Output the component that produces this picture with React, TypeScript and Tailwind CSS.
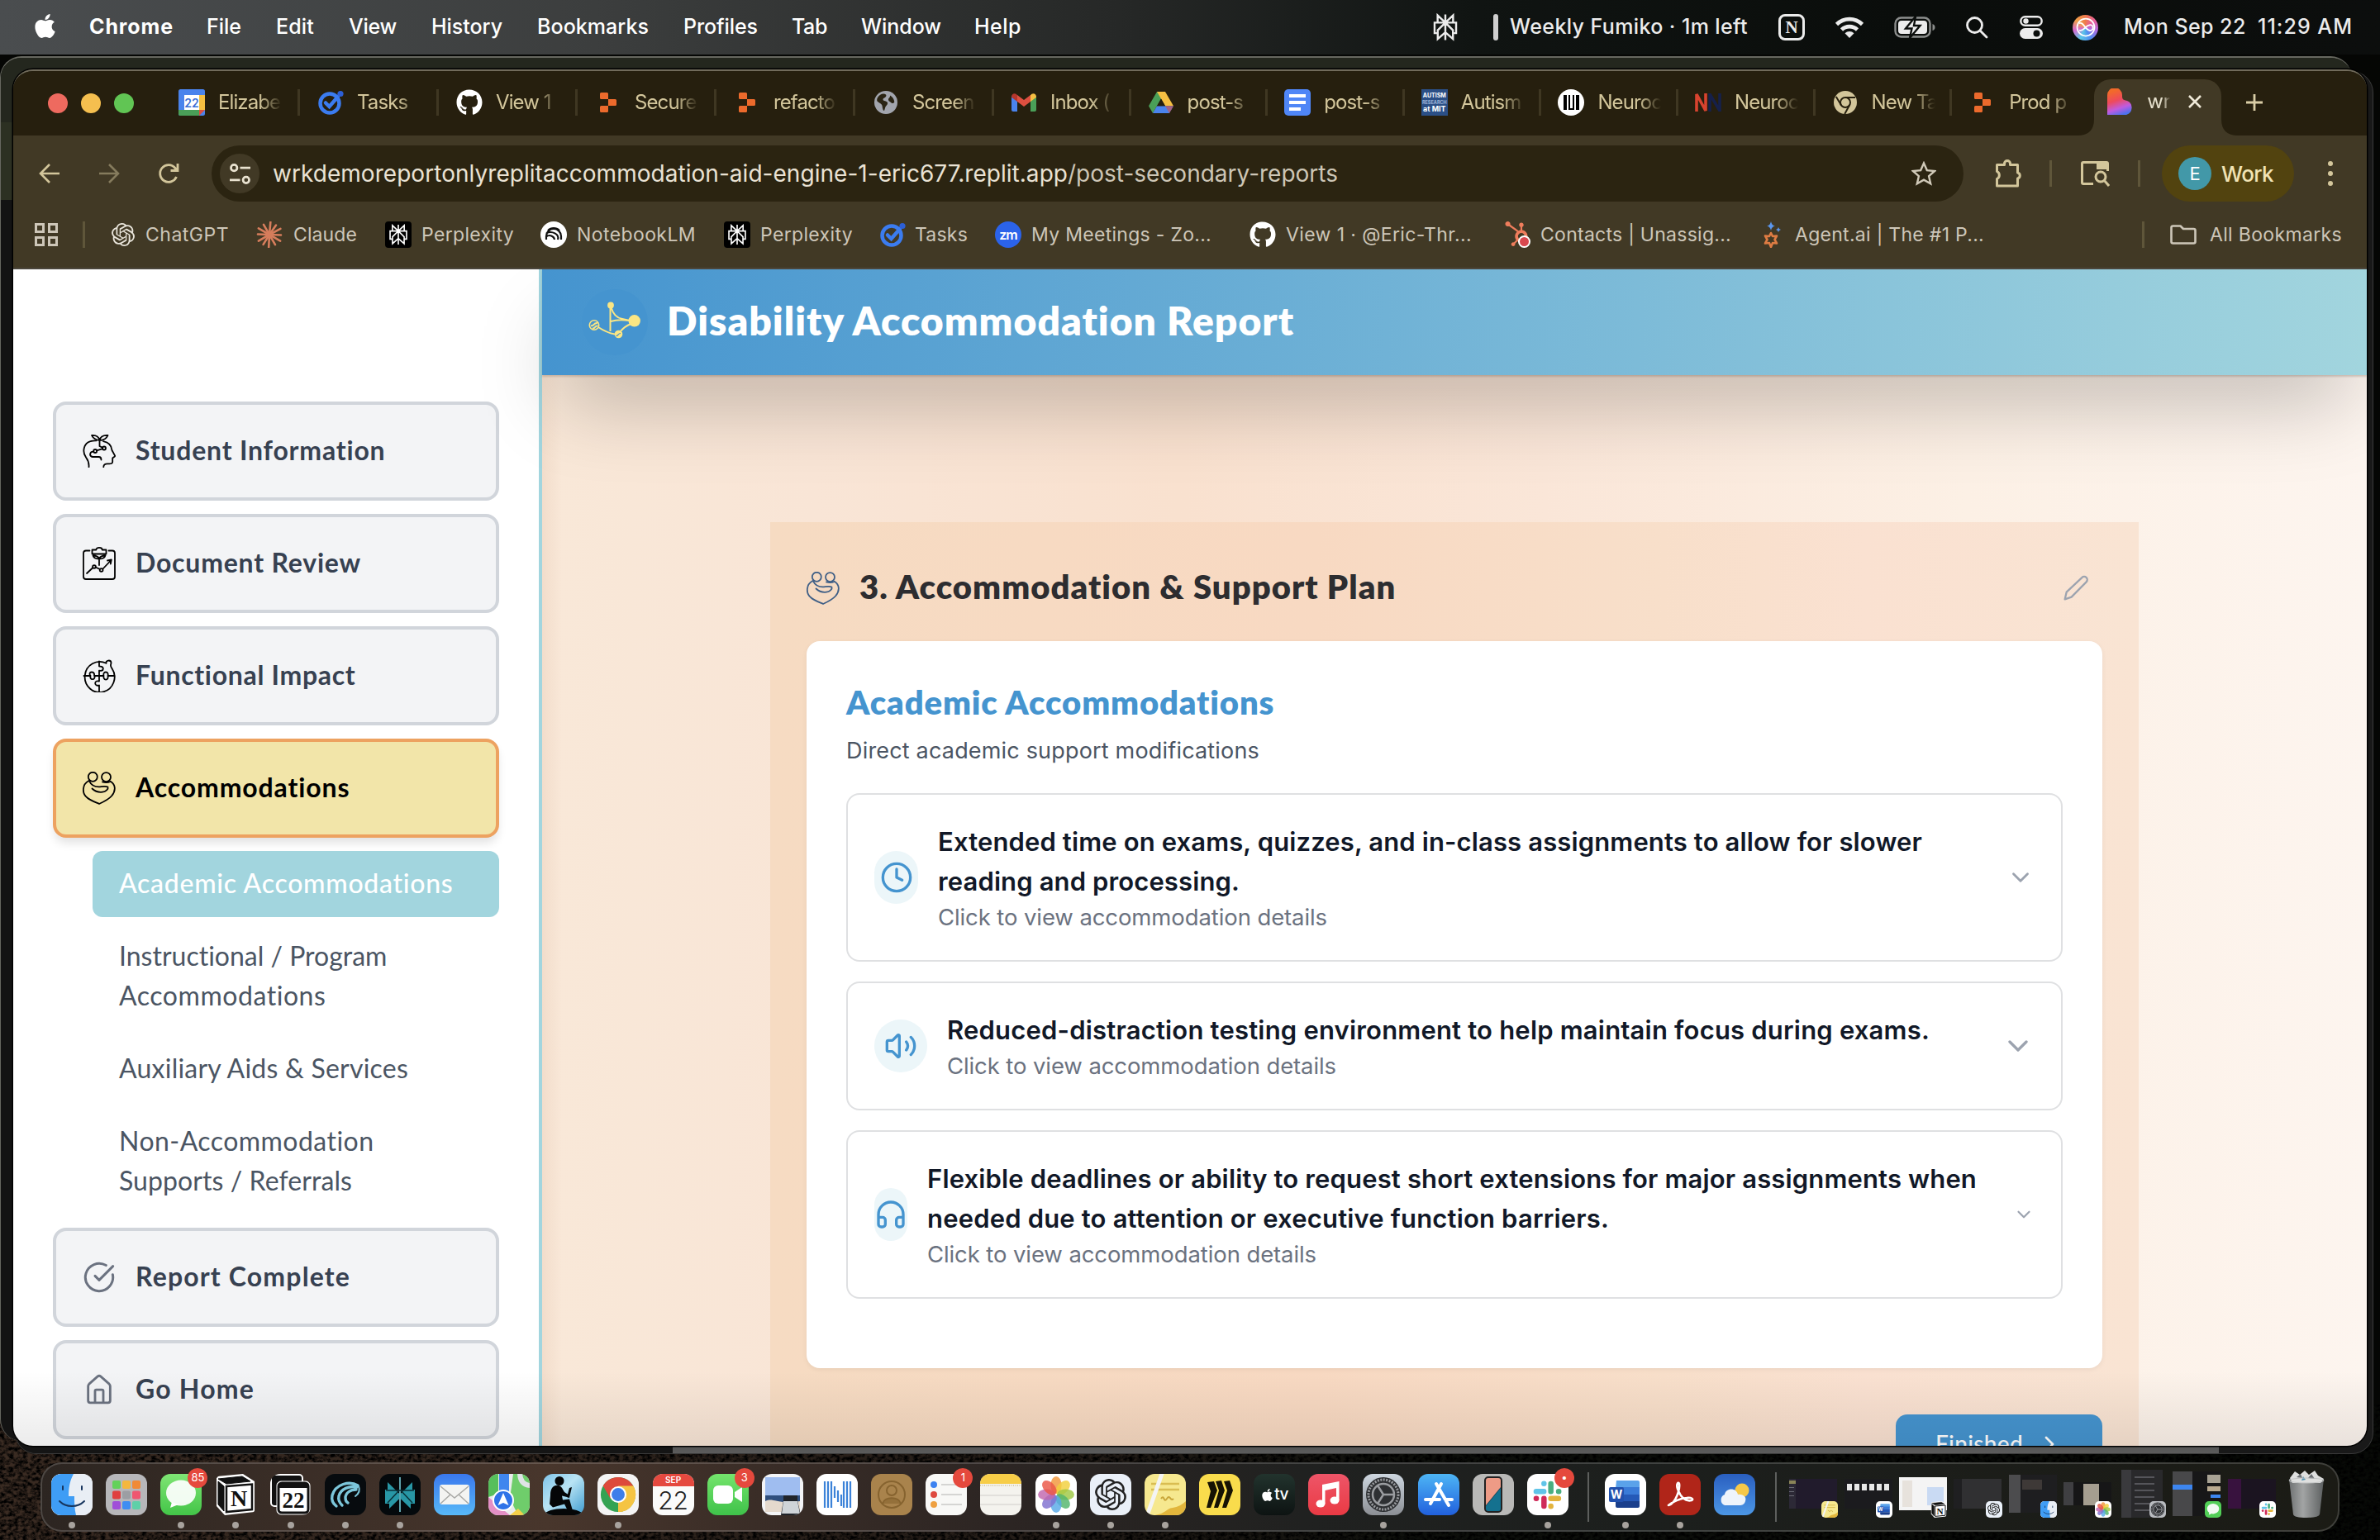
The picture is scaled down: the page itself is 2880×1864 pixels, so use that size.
import React, { useLayoutEffect, useRef, useState } from "react";
import { FaApple, FaGithub, FaHubspot } from "react-icons/fa";
import { SiOpenai } from "react-icons/si";
import { ChevronDown, ChevronRight, CircleCheckBig, Clock, Headphones, Volume2 } from "lucide-react";

/* Label that adjusts its tracking so the text fills the given width. */
function Fit({ w, className = "", children }: { w: number; className?: string; children: string }) {
  const ref = useRef<HTMLSpanElement>(null);
  const [ls, setLs] = useState(0);
  useLayoutEffect(() => {
    if (ref.current) {
      const natural = ref.current.getBoundingClientRect().width;
      setLs((w - natural) / children.length);
    }
  }, [w, children]);
  return (
    <span className={"block shrink-0 whitespace-pre " + className} style={{ width: w }}>
      <span ref={ref} className="inline-block" style={{ letterSpacing: ls }}>
        {children}
      </span>
    </span>
  );
}

/* ---------- small glyphs ---------- */

const Perplexity = ({ className, sw = 1.5 }: { className?: string; sw?: number }) => (
  <svg viewBox="0 0 24 24" className={className} fill="none" stroke="currentColor" strokeWidth={sw}>
    <path d="M12 1v22M12 8 5.4 1.8V8M12 8l6.600-6.200V8M5.600 17H2.800V8h18.400v9h-2.800M12 8l-6.500 6.500V22l6.500-5.700M12 8l6.500 6.500V22L12 16.300" />
  </svg>
);

const TaskIcon = ({ className }: { className?: string }) => (
  <svg viewBox="0 0 32 32" className={className} fill="none">
    <circle cx="15" cy="17" r="11.500" stroke="#3b7cf0" strokeWidth="4.500" />
    <path d="M10 16.500l4.500 4.500L25 9" stroke="#3b7cf0" strokeWidth="4.500" strokeLinecap="round" />
    <circle cx="28" cy="5.500" r="3.600" fill="#2c5fd6" />
  </svg>
);

const ChromeIcon = ({ className }: { className?: string }) => (
  <svg viewBox="0 0 48 48" className={className}>
    <circle cx="24" cy="24" r="22" fill="#34a353" />
    <path d="M24 24 5 13A22 22 0 0 1 43 13Z" fill="#dd4a3c" />
    <path d="M24 24 43 13A22 22 0 0 1 24 46Z" fill="#f5c443" />
    <path d="M5 13 14.500 29.500 24 14H43A22 22 0 0 0 5 13Z" fill="#dd4a3c" />
    <path d="M43.100 13H24l9.500 16.500L24 46A22 22 0 0 0 43.100 13Z" fill="#f5c443" />
    <circle cx="24" cy="24" r="10.500" fill="#fff" />
    <circle cx="24" cy="24" r="8.300" fill="#3d7eea" />
  </svg>
);

const Slack = ({ className }: { className?: string }) => (
  <svg viewBox="0 0 24 24" className={className} strokeWidth="4.200" strokeLinecap="round" fill="none">
    <path d="M9.300 3v.1M3.200 9.300h6" stroke="#5fc4e8" />
    <path d="M14.700 3.200v6M20.800 9.300h.1" stroke="#4aae80" />
    <path d="M14.700 14.700h6M14.700 20.800v.1" stroke="#e3b33d" />
    <path d="M9.300 14.700v6M3.200 14.700h.1" stroke="#cf2a58" />
  </svg>
);

const Photos = ({ className }: { className?: string }) => (
  <svg viewBox="0 0 50 50" className={className}>
    {[
      ["#f2963a", 0], ["#f1cf3c", 45], ["#9fc844", 90], ["#52b56b", 135],
      ["#58a9e8", 180], ["#7f70cf", 225], ["#c166ae", 270], ["#ea5546", 315],
    ].map(([c, a]) => (
      <ellipse key={a} cx="25" cy="13.500" rx="6.600" ry="10.500" fill={c as string} opacity=".82" transform={`rotate(${a} 25 25)`} />
    ))}
  </svg>
);

const Replit = ({ className }: { className?: string }) => (
  <svg viewBox="0 0 20 24" className={className} fill="#ec6a2c">
    <path d="M1.500 0H8.500Q10 0 10 1.500V8H1.500Q0 8 0 6.500V1.500Q0 0 1.500 0ZM10 8h8.500Q20 8 20 9.500v5q0 1.500-1.500 1.500H10ZM1.500 16H10v6.500Q10 24 8.500 24h-7Q0 24 0 22.500v-5Q0 16 1.500 16Z" />
  </svg>
);

/* ---------- page line icons ---------- */

const line = { fill: "none", stroke: "currentColor", strokeWidth: 1.8, strokeLinecap: "round", strokeLinejoin: "round" } as const;

const HeadPlant = () => (
  <svg viewBox="0 0 40 40" className="size-10" {...line}>
    <path d="M7.500 39.300C8 34 7 31.500 4 27.500-1 20.500 1.500 10.500 9.500 8.200 12 7.400 14 7.200 16.500 7.400M25 8.200C32 9.500 35 13.500 35.500 19l3.600 6.600c.6 1.400-2.800 1.900-2.900 3V33c0 2-2 2.600-5 2.400-4.500-.3-5.900 1-5.900 3.900" />
    <path d="M20.500 14V7C17 7 12.500 4.500 11 1c4.500-.3 8.500 1.500 9.500 6C21.500 2.500 25.500.7 30.500 1 29 4.500 25 7 20.500 7M20.500 14l3.200 1.600M17 19.300l7.200-2.200M13.200 20.700C8.500 20.500 7.500 26 12 27h7.500c2.200 0 3 1.300 3 3.500" />
    <circle cx="15.200" cy="20" r="2" /><circle cx="26" cy="16.500" r="2" />
  </svg>
);
const ClipboardPlant = () => (
  <svg viewBox="0 0 40 40" className="size-10" {...line}>
    <path d="M8.500 4.500H4Q1 4.500 1 7.500V36q0 3 3 3h32q3 0 3-3V7.500q0-3-3-3h-4.500" />
    <path d="M11.500 3.500h4.800c0-3.400 7.400-3.400 7.400 0h4.800v5h-17ZM20 22v-7.500c-4 0-6.500-1-7.500-4 4.500 0 6.500 1 7.500 4 1-3 3-4 7.500-4-1 3-3.500 4-7.500 4M5 32l7.500-7M15.500 24.500l5 2.300M24.500 26.500 34.500 16M30 16.500l4.800-1-1 5" />
    <circle cx="14" cy="24" r="1.900" /><circle cx="22.600" cy="28" r="1.900" />
  </svg>
);
const Puzzle = () => (
  <svg viewBox="0 0 40 40" className="size-10" {...line}>
    <path d="M28.500 4.800A18 18.500 0 1 0 35.500 11M28.500 4.800C27.500 1 34 .2 34.500 4c.2 2-2 3.200.8 7" />
    <path d="M20 2.500v6c1.500.5 4.600-.4 4.800 2.600.2 3.200-3.200 2.800-4.800 2.600V20M20 20h-5.500c.4 1.800-.2 4.200-2.600 4.200S9 21.800 9.500 20H1.500M9.500 20c-1.500-1.500-1.500-4.500 1.500-4.500s3.300 2.500 3 4.500M20 20h5.500c-.5-2-.1-4.500 2.500-4.500s3 2.500 2.500 4.500h8M25.500 20c-.3 2.400.2 4.600 2.600 4.600s2.800-2.600 2.400-4.600M20 20v6.500c-1.800-.4-5-.5-4.800 2.700.2 3 3.200 2.700 4.800 2.300v8" />
  </svg>
);
const Hug = () => (
  <svg viewBox="0 0 40 40" className="size-10" {...line}>
    <circle cx="12.300" cy="6.300" r="5.500" /><circle cx="28.500" cy="6.600" r="5.500" />
    <path d="M7.500 11C-1 15.500-1 26.500 5.500 31.500 9 34.500 15.500 37 20 39c5-2.300 11.500-5.500 15-9.500 5.500-6.500 5-14-1.200-17.500" />
    <path d="M8 11.300C11 17.500 16 18.700 21 18.300c3.500-.3 7-.9 9.500.2.900 2.600-2.500 5.700-6.500 6.200-4.500.5-8.700-.5-12.500-4.200M24 12.500c3.500 1.200 7.500.5 9.800-.5" />
  </svg>
);
const Home = () => (
  <svg viewBox="0 0 24 24" className="size-10" {...line} strokeWidth={1.7}>
    <path d="M4 9.500q0-.9.700-1.600L10.800 2.500q1.200-1 2.400 0l6.100 5.400q.7.700.7 1.600V20q0 1.500-1.500 1.500h-13Q4 21.500 4 20ZM9 21.500V13q0-.9.900-.9h4.200q.9 0 .9.900v8.500" />
  </svg>
);

/* ---------- menu bar ---------- */

function MenuBar() {
  const items: [string, number, number][] = [
    ["File", 42, 42], ["Edit", 46, 42], ["View", 58, 42], ["History", 86, 42], ["Bookmarks", 135, 42],
    ["Profiles", 90, 41], ["Tab", 43, 41], ["Window", 97, 40], ["Help", 57, 0],
  ];
  return (
    <div className="flex h-[66px] w-full items-center bg-[linear-gradient(90deg,#4a4d4f_0%,#3c3e3e_25%,#262827_47%,#101412_62%,#0a0d0b_80%,#0c0e0d_100%)] text-[25px] text-white">
      <FaApple className="mr-[37px] mb-1 ml-[38px] size-[33px]" />
      <Fit w={102} className="mr-10 font-bold">Chrome</Fit>
      {items.map(([t, w, g]) => (
        <div key={t} className="flex" style={{ marginRight: g }}>
          <Fit w={w} className="font-medium">{t}</Fit>
        </div>
      ))}
      <div className="ml-auto flex items-center text-[#ececec]">
        <Perplexity className="mr-[41px] size-[34px]" sw={1.7} />
        <div className="mr-[14px] h-8 w-1.5 rounded-full bg-[#cfcfcf]" />
        <Fit w={288} className="mr-[37px] font-medium">Weekly Fumiko · 1m left</Fit>
        <div className="mr-9 flex size-8 items-center justify-center rounded-[8px] border-[3px] border-[#ececec] font-['Liberation_Serif'] text-[21px] leading-none font-bold">N</div>
        <svg viewBox="0 0 36 26" className="mr-9 h-[26px] w-9" fill="none" stroke="#ececec" strokeWidth="4.600">
          <path d="M2.500 9.500a22 22 0 0 1 31 0M8.500 16a13.500 13.500 0 0 1 19 0" />
          <path d="m12.500 20.300 5.500 5.700 5.500-5.700a8 8 0 0 0-11 0Z" fill="#ececec" stroke="none" />
        </svg>
        <svg viewBox="0 0 50 26" className="mr-9 h-[26px] w-[50px]">
          <rect x="1.500" y="1.500" width="42" height="23" rx="7" fill="none" stroke="#8b8d8c" strokeWidth="2.400" />
          <rect x="5" y="5" width="35" height="16" rx="4" fill="#ececec" />
          <path d="M46.500 9v8q3-1 3-4t-3-4Z" fill="#8b8d8c" />
          <path d="M26 0 14 14.500h7.500L19 26l12.500-15H24Z" fill="#ececec" stroke="#0b0e0c" strokeWidth="2.400" />
        </svg>
        <svg viewBox="0 0 28 28" className="mr-[38px] size-7" fill="none" stroke="#ececec" strokeWidth="2.800" strokeLinecap="round">
          <circle cx="11.500" cy="11.500" r="9" /><path d="m18.500 18.500 7.500 7.500" />
        </svg>
        <svg viewBox="0 0 28 28" className="mr-9 size-7">
          <rect x="1.300" y="1.300" width="25.400" height="10.400" rx="5.200" fill="none" stroke="#ececec" strokeWidth="2.400" />
          <circle cx="7.500" cy="6.500" r="3.200" fill="#ececec" />
          <rect x="0" y="15" width="28" height="13" rx="6.500" fill="#ececec" />
          <circle cx="20.500" cy="21.500" r="4" fill="#0b0e0c" />
        </svg>
        <div className="mr-[31px] flex size-[31px] items-center justify-center rounded-full bg-[conic-gradient(#ef7b4c,#e85f9a,#b06be0,#4f8df0,#5cc8e8,#d96ad0,#f0a04a,#ef7b4c)]">
          <svg viewBox="0 0 24 24" className="size-7" fill="none" stroke="#fff" strokeWidth="1.500">
            <circle cx="12" cy="12" r="9" /><path d="M5 8c5-3 7 10 13 7 3-2 1-7-3-5-4 1-6 7-10 5" />
          </svg>
        </div>
        <Fit w={162} className="font-medium">Mon Sep 22  </Fit>
        <Fit w={115} className="mr-[33px] font-medium">11:29 AM</Fit>
      </div>
    </div>
  );
}

/* ---------- browser chrome ---------- */

const gCal = (
  <svg viewBox="0 0 32 32" className="size-8">
    <rect width="32" height="32" rx="2.500" fill="#4a83ec" />
    <path d="M25 7h7v18h-7z" fill="#f5bf42" /><path d="M0 25h25v7H2.500Q0 32 0 29.500Z" fill="#4a9f58" />
    <path d="M25 25h7l-7 7z" fill="#dd4f40" /><path d="M7 7h18v18H7z" fill="#fff" />
    <text x="16" y="21.500" textAnchor="middle" fontSize="14" fontWeight="600" fill="#3b6fd4" fontFamily="Inter">22</text>
  </svg>
);
const globe = (
  <svg viewBox="0 0 28 28" className="size-7">
    <circle cx="14" cy="14" r="14" fill="#a2a5ad" />
    <path d="M3.500 9C5 5.500 8 3.500 11.500 3.500c3.500.5 3.500 2.500 2 4-1 1.200-3 1-3 3 0 1.500 3 1.500 5 3 1.500 1.500 0 3.500-1.500 5-1 1-1 3-2 5.500-2-.5-2-4-2.500-6-.5-2.500-4.500-4-6-5.500-.5-1-.3-2.300 0-3.500ZM19 5.500c3 1.500 5 4.500 5.300 8-1.300 2-3 2-4.300.5-1.500-1.500-3-1.500-3-3.500s2.500-2.500 2-5Z" fill="#2a2414" />
  </svg>
);
const gmail = (
  <svg viewBox="0 0 30 22" className="h-[22px] w-[30px]">
    <path d="M0 2.500V20q0 2 2 2h5V8Z" fill="#4a83ec" /><path d="M30 2.500V20q0 2-2 2h-5V8Z" fill="#4a9f58" />
    <path d="M23 2.200V10l7-5.200C30-.5 25-1 23 2.200Z" fill="#f5bf42" /><path d="M7 2.200V10L0 4.800C0-.5 5-1 7 2.200Z" fill="#b5362c" />
    <path d="M7 2v8l8 6 8-6V2l-8 6Z" fill="#dd4f40" />
  </svg>
);
const drive = (
  <svg viewBox="0 0 30 26" className="h-[26px] w-[30px]">
    <path d="M10 0h10l-5 8.600L5 26 0 17.300Z" fill="#4a9f58" /><path d="M10 0h10l10 17.300H20Z" fill="#f5bf42" />
    <path d="M10 17.300h20L25 26H5Z" fill="#4a83ec" /><path d="m20 17.300h10L25 26Z" fill="#dd4f40" opacity=".6" />
    <path d="m15 8.600-5 8.700h10Z" fill="#261f0e" />
  </svg>
);
const gdoc = (
  <div className="flex size-8 flex-col justify-center gap-1 rounded-[5px] bg-[#4f86f7] pl-1.5">
    <div className="h-1 w-5 bg-white" /><div className="h-1 w-5 bg-white" /><div className="h-1 w-[14px] bg-white" />
  </div>
);
const mit = (
  <div className="flex size-8 flex-col items-center justify-center bg-[#2b4f86] text-[8px] leading-[8px] font-bold text-white">
    <span className="text-[7px]">AUTISM</span><span className="text-[5.5px] text-[#9fb6d8]">RESEARCH</span><span className="text-[9px]">at MIT</span>
  </div>
);
const bars = (
  <div className="flex size-8 items-center justify-center gap-[2px] rounded-full bg-white">
    <div className="h-[18px] w-[4px] bg-black" /><div className="h-[18px] w-[7px] border-x-2 border-b-2 border-black" /><div className="h-[18px] w-[4px] bg-black" />
  </div>
);
const nn = (
  <svg viewBox="0 0 32 22" className="h-[22px] w-8" fill="none" strokeWidth="3.600">
    <path d="M2 22V1l11 20V0" stroke="#d8432f" /><path d="M18 22V1l12 20V0" stroke="#16204a" />
  </svg>
);
const chromeMono = (
  <svg viewBox="0 0 28 28" className="size-7">
    <circle cx="14" cy="14" r="14" fill="#d3c69b" />
    <g stroke="#261f0e" strokeWidth="2" fill="none"><circle cx="14" cy="14" r="6" /><path d="M14 8h12M8.800 17 2.800 7M19.200 17l-6 11" /></g>
    <circle cx="14" cy="14" r="3.600" fill="#d3c69b" />
  </svg>
);
const blob = (
  <svg viewBox="0 0 32 32" className="size-8 shrink-0">
    <defs><linearGradient id="blob" x1=".3" y1="0" x2=".6" y2="1"><stop offset=".1" stopColor="#f26a2a" /><stop offset=".45" stopColor="#ee4a5c" /><stop offset=".75" stopColor="#c05be0" /><stop offset="1" stopColor="#4b72ef" /></linearGradient></defs>
    <path d="M0 8a9 9 0 0 1 18 0c0 4 0 6 6 7a9 9 0 0 1-1 17H0Z" fill="url(#blob)" />
  </svg>
);

const tabs: [React.ReactNode, string][] = [
  [gCal, "Elizabe"], [<TaskIcon className="size-8" />, "Tasks"], [<FaGithub className="size-8 text-white" />, "View 1"],
  [<Replit className="h-6 w-5" />, "Secure"], [<Replit className="h-6 w-5" />, "refacto"], [globe, "Screen"], [gmail, "Inbox ("],
  [drive, "post-s"], [gdoc, "post-s"], [mit, "Autism"], [bars, "Neuroc"], [nn, "Neuroc"], [chromeMono, "New Ta"],
  [<Replit className="h-6 w-5" />, "Prod p"],
];

function TabStrip() {
  return (
    <div className="flex h-[78px] items-center bg-[#261f0e] text-[24px] text-[#d3c69b]">
      <div className="ml-[42px] flex gap-4">
        <div className="size-6 rounded-full bg-[#ee6a5f]" />
        <div className="size-6 rounded-full bg-[#f5bf4f]" />
        <div className="size-6 rounded-full bg-[#61c554]" />
      </div>
      <div className="ml-[33px] flex pb-[2px]">
        {tabs.map(([icon, t], i) => (
          <div key={i} className={"flex h-8 items-center " + (i < 6 ? "w-[168px] border-r-[3px] border-[#3f3722] pl-[21px]" : i < 13 ? "w-[165.6px] border-r-[3px] border-[#3f3722] pl-5" : "w-[172px] pl-[21px]")}>
            <div className="mr-4 flex size-8 shrink-0 items-center justify-center">{icon}</div>
            <div className="w-[77px] overflow-hidden whitespace-nowrap tracking-[-0.9px] [mask-image:linear-gradient(90deg,#000_65%,transparent)]">{t}</div>
          </div>
        ))}
      </div>
      <div className="relative flex h-[68px] w-[154px] items-center self-end rounded-t-[20px] bg-[#413925] pb-3.5 pl-4">
        <svg viewBox="0 0 20 20" className="absolute bottom-0 -left-5 size-5" fill="#413925"><path d="M20 0v20H0Q20 20 20 0Z" /></svg>
        <svg viewBox="0 0 20 20" className="absolute -right-5 bottom-0 size-5" fill="#413925"><path d="M0 0v20h20Q0 20 0 0Z" /></svg>
        {blob}
        <div className="ml-4 w-[28px] overflow-hidden text-[#e6e0cd] [mask-image:linear-gradient(90deg,#000_70%,transparent)]">wr</div>
        <svg viewBox="0 0 16 16" className="ml-[22px] size-4 shrink-0" stroke="#f0ead9" strokeWidth="2.600"><path d="m1 1 14 14M15 1 1 15" /></svg>
      </div>
      <svg viewBox="0 0 20 20" className="mb-[2px] ml-[30px] size-5" stroke="#d9cda6" strokeWidth="2.800"><path d="M10 0v20M0 10h20" /></svg>
    </div>
  );
}

function Toolbar() {
  return (
    <div className="flex h-[92px] items-center bg-[#413925] text-[#d3c69b]">
      <svg viewBox="0 0 24 24" className="ml-8 size-6 overflow-visible" fill="none" stroke="currentColor" strokeWidth="2.600"><path d="M12 1 1 12l11 11M1 12h23" /></svg>
      <svg viewBox="0 0 24 24" className="ml-12 size-6 overflow-visible text-[#857b5d]" fill="none" stroke="currentColor" strokeWidth="2.600"><path d="m12 1 11 11-11 11M23 12H0" /></svg>
      <svg viewBox="0 0 24 24" className="ml-12 size-6 overflow-visible" fill="none" stroke="currentColor" strokeWidth="2.800"><path d="M21.500 16A10.300 10.300 0 1 1 20 5.500l2 2.500M23 0v8.500h-8.500" /></svg>
      <div className="ml-[40px] flex h-[68px] w-[2120px] items-center rounded-full bg-[#2b2411] pl-[10px] text-[28px]">
        <div className="flex size-12 items-center justify-center rounded-full bg-[#413925]">
          <svg viewBox="0 0 24 24" className="size-[25px]" fill="none" stroke="#e9e2d0" strokeWidth="2.600"><circle cx="5" cy="5" r="3.600" /><path d="M12 5h12M0 19h12" /><circle cx="19" cy="19" r="3.600" /></svg>
        </div>
        <Fit w={962} className="ml-4 text-[#e9e2d4]">wrkdemoreportonlyreplitaccommodation-aid-engine-1-eric677.replit.app</Fit>
        <Fit w={327} className="text-[#cdc6b6]">/post-secondary-reports</Fit>
        <svg viewBox="0 0 30 30" className="mr-[33px] ml-auto size-[30px]" fill="none" stroke="#d0c9b8" strokeWidth="2.400"><path d="m15 2.500 3.800 8.600 9.300.9-7 6.200 2.100 9.200L15 22.600l-8.200 4.800 2.100-9.200-7-6.200 9.300-.9Z" /></svg>
      </div>
      <svg viewBox="0 0 34 34" className="ml-[37px] size-[34px]" fill="none" stroke="currentColor" strokeWidth="3"><path d="M3.500 6.500h9V5a3.500 3.500 0 0 1 7 0v1.500h9v9.500a3.600 3.600 0 0 1 0 7v9h-25v-8.500a5 5 0 0 0 0-9Z" strokeLinejoin="round" /></svg>
      <div className="ml-[33px] h-8 w-[3px] bg-[#5f563a]" />
      <svg viewBox="0 0 36 32" className="ml-[34px] h-8 w-9" fill="none" stroke="currentColor" strokeWidth="3"><path d="M16 28.500H4q-1.500 0-1.500-1.500V4Q2.500 2.500 4 2.500h28q1.500 0 1.500 1.500v9" /><path d="M20 2h14v9H20z" fill="currentColor" stroke="none" /><circle cx="25" cy="20" r="6" /><path d="m29 24 6 7" /></svg>
      <div className="ml-[34px] h-8 w-[3px] bg-[#5f563a]" />
      <div className="ml-[26px] flex h-[68px] w-[160px] items-center rounded-full bg-[#52430f] pl-5">
        <div className="flex size-10 items-center justify-center rounded-full bg-[#4298a8] text-[22px] text-white">E</div>
        <Fit w={63} className="ml-3 text-[26px] font-medium text-[#f1e3b4]">Work</Fit>
      </div>
      <div className="ml-[41px] flex flex-col gap-[6px]">
        <div className="size-[6px] rounded-full bg-[#d3c69b]" /><div className="size-[6px] rounded-full bg-[#d3c69b]" /><div className="size-[6px] rounded-full bg-[#d3c69b]" />
      </div>
    </div>
  );
}

const perplexityTile = (
  <div className="flex size-8 items-center justify-center rounded-[4px] bg-black text-white"><Perplexity className="size-[26px]" /></div>
);
const claude = (
  <svg viewBox="0 0 32 32" className="size-8" stroke="#d67d5c" strokeWidth="2.600" strokeLinecap="round">
    {[5, 35, 62, 92, 120, 150, 183, 212, 240, 272, 300, 330].map((a, i) => (
      <path key={a} d={i % 2 ? "M16 16V2" : "M16 16V.8"} transform={`rotate(${a} 16 16)`} />
    ))}
  </svg>
);
const notebook = (
  <svg viewBox="0 0 32 32" className="size-8"><circle cx="16" cy="16" r="16" fill="#fff" />
    <g fill="none" stroke="#111" strokeWidth="2.200"><path d="M7 22v-4a9 9 0 0 1 18 0v4M7 14.500a9 7 0 0 1 14 7.500M7 18.500a6 5.500 0 0 1 10 3.500M9 11a10 10 0 0 1 14 0" /></g>
  </svg>
);
const zm = <div className="flex size-8 items-center justify-center rounded-full bg-[#2b63ea] text-[16px] font-semibold tracking-[-1px] text-white">zm</div>;
const hubspot = (
  <div className="relative size-8"><FaHubspot className="size-[30px] text-[#ef7d5c]" /><div className="absolute right-0 bottom-0 size-[15px] rounded-full border-2 border-white bg-[#d9484f]" /></div>
);
const agent = (
  <svg viewBox="0 0 22 32" className="h-8 w-[22px]">
    <path d="M9 0q1 5 5 5.500-4 .5-5 5.500-1-5-5-5.500Q8 5 9 0ZM18 7q.5 2.500 3 3-2.500.5-3 3-.5-2.500-3-3 2.500-.5 3-3Z" fill="#5b97ee" />
    <path d="M9 14l2 4 5-.5-2.500 4.500 2.500 4.500-5-.5-2 5-2-5-5 .5L4.500 22 2 17.500l5 .5Z" fill="none" stroke="#de7c43" strokeWidth="2.600" strokeLinejoin="round" />
  </svg>
);

/* icon, label, icon width, label width, gap to label, gap to next entry */
const bookmarks: [React.ReactNode, string, number, number, number, number][] = [
  [<SiOpenai className="size-[28px] text-[#e8e4da]" />, "ChatGPT", 28, 101, 13, 33],
  [claude, "Claude", 32, 77, 13, 34],
  [perplexityTile, "Perplexity", 32, 112, 12, 32],
  [notebook, "NotebookLM", 32, 144, 12, 34],
  [perplexityTile, "Perplexity", 32, 112, 12, 32],
  [<TaskIcon className="size-8" />, "Tasks", 32, 64, 11, 33],
  [zm, "My Meetings - Zo...", 32, 218, 12, 46],
  [<FaGithub className="size-8 text-white" />, "View 1 · @Eric-Thr...", 32, 225, 12, 39],
  [hubspot, "Contacts | Unassig...", 32, 231, 12, 39],
  [agent, "Agent.ai | The #1 P...", 22, 229, 16, 0],
];

function Bookmarks() {
  return (
    <div className="flex h-[70px] items-center border-b-2 border-[#4b463c] bg-[#413925] pb-3 text-[23px] text-[#cdc6b8]">
      <svg viewBox="0 0 28 28" className="ml-[26px] size-7" fill="none" stroke="#cdc6b8" strokeWidth="3"><path d="M1.500 1.500h9v9h-9zM17.500 1.500h9v9h-9zM1.500 17.500h9v9h-9zM17.500 17.500h9v9h-9z" /></svg>
      <div className="mr-[32px] ml-[30px] h-8 w-[3px] bg-[#5f563a]" />
      {bookmarks.map(([icon, t, iw, w, gap, after], i) => (
        <div key={i} className="flex items-center" style={{ marginRight: after }}>
          <div className="flex items-center" style={{ width: iw, marginRight: gap }}>{icon}</div>
          <Fit w={w}>{t}</Fit>
        </div>
      ))}
      <div className="ml-auto h-8 w-[3px] bg-[#5f563a]" />
      <svg viewBox="0 0 32 24" className="mx-[16px] ml-[31px] h-6 w-8" fill="none" stroke="#cdc6b8" strokeWidth="2.600" strokeLinejoin="round"><path d="M3.500 1.500h9l3.500 3.500h12.500q2 0 2 2v13.500q0 2-2 2h-25q-2 0-2-2v-17q0-2 2-2Z" /></svg>
      <Fit w={160} className="mr-[30px]">All Bookmarks</Fit>
    </div>
  );
}

/* ---------- report page ---------- */

function NavCard({ icon, label, w, active }: { icon: React.ReactNode; label: string; w: number; active?: boolean }) {
  return (
    <div className={"flex h-[120px] w-[540px] shrink-0 items-center gap-6 rounded-[16px] border-4 pl-8 text-[32px] font-bold " + (active ? "border-[#eda260] bg-[#f2e5a9] text-black shadow-[0_8px_12px_-2px_rgba(0,0,0,0.12)]" : "border-[#d1d5db] bg-[#f3f4f6] text-[#374151]")}>
      {icon}
      <Fit w={w} className="pb-[3px]">{label}</Fit>
    </div>
  );
}

function SubItem({ lines, active }: { lines: [string, number][]; active?: boolean }) {
  return (
    <div className={"rounded-[12px] px-8 pt-[15px] pb-[17px] " + (active ? "bg-[#a2d5de] font-medium text-white" : "")}>
      {lines.map(([t, w]) => <Fit key={t} w={w}>{t}</Fit>)}
    </div>
  );
}

function Sidebar() {
  return (
    <div className="flex w-[640px] shrink-0 flex-col gap-4 border-r-4 border-[#a2d5de] bg-white pt-[160px] pl-12 font-['Lato']">
      <NavCard icon={<span className="text-black"><HeadPlant /></span>} label="Student Information" w={303} />
      <NavCard icon={<span className="text-black"><ClipboardPlant /></span>} label="Document Review" w={273} />
      <NavCard icon={<span className="text-black"><Puzzle /></span>} label="Functional Impact" w={267} />
      <NavCard icon={<Hug />} label="Accommodations" w={260} active />
      <div className="ml-12 flex w-[492px] flex-col gap-2 text-[32px] leading-[48px] text-[#4b5563]">
        <SubItem lines={[["Academic Accommodations", 405]]} active />
        <SubItem lines={[["Instructional / Program", 325], ["Accommodations", 251]]} />
        <SubItem lines={[["Auxiliary Aids & Services", 350]]} />
        <SubItem lines={[["Non-Accommodation", 309], ["Supports / Referrals", 282]]} />
      </div>
      <NavCard icon={<CircleCheckBig className="size-10 text-[#6b7280]" strokeWidth={1.8} />} label="Report Complete" w={260} />
      <NavCard icon={<span className="text-[#6b7280]"><Home /></span>} label="Go Home" w={144} />
    </div>
  );
}

function Header() {
  return (
    <div className="relative z-10 flex h-32 shrink-0 items-center bg-[linear-gradient(90deg,#4594cf_0%,#a2d5de_100%)] shadow-[0_50px_100px_-24px_rgba(0,0,0,0.28),0_2px_2px_rgba(120,90,70,0.25)]">
      <div className="ml-12 flex size-20 items-center justify-center rounded-full bg-[#4594cf]">
        <svg viewBox="0 0 64 60" className="h-[60px] w-16" fill="none" stroke="#fbe683" strokeWidth="2">
          <path d="M26.500 13V41M27.500 12C30 21 35 25 41 26L50 28M27 29c7-2 15-2 22-1M51.500 32C46 34 42 37 38 42M12 36c6 4 12 7 20 8.500" />
          <circle cx="27" cy="9.500" r="3.900" fill="#fbe683" stroke="none" /><circle cx="55.700" cy="28.300" r="7.200" fill="#fbe683" stroke="none" />
          <circle cx="7" cy="33.500" r="5.700" strokeWidth="1.600" /><path d="M3 34c4 2 3-4 8-3M5 37.500c4 .5 2-3.500 6.500-3" />
          <circle cx="36.500" cy="44.500" r="4.800" fill="#fbe683" stroke="none" /><path d="M33.500 46.500c3 .5 2-3 5.500-3" stroke="#4594cf" strokeWidth="1.200" />
        </svg>
      </div>
      <Fit w={760} className="ml-[23px] pb-1 font-['Lato'] text-[48px] font-extrabold text-white">Disability Accommodation Report</Fit>
    </div>
  );
}

function Item({ icon, pill, lines, chev }: { icon: React.ReactNode; pill: string; lines: [string, number][]; chev: string }) {
  return (
    <div className="flex items-center rounded-[16px] border-2 border-[#dfe0e2] bg-white p-8">
      <div className={"mr-6 flex h-16 shrink-0 items-center justify-center rounded-full bg-[#ecf6f9] text-[#4594cf] " + pill}>{icon}</div>
      <div className="flex-1">
        <div className="-mb-px pt-px">
          {lines.map(([t, w]) => <Fit key={t} w={w} className="text-[31px] leading-[48px] font-semibold text-[#111827]">{t}</Fit>)}
        </div>
        <Fit w={471} className="text-[27.5px] leading-10 text-[#6b7280]">Click to view accommodation details</Fit>
      </div>
      <ChevronDown className={"shrink-0 text-[#9ca3af] " + chev} />
    </div>
  );
}

function Report() {
  return (
    <div className="flex flex-1 flex-col overflow-hidden bg-[linear-gradient(90deg,rgba(160,90,50,0.08)_0,transparent_24px),linear-gradient(90deg,#f9e8d8_0%,#f9e5d6_15%,#f9e1cf_35%,#fae6d8_55%,#fcf0e5_78%,#fdf5ef_100%)] pt-[178px] pl-[276px]">
      <div className="flex w-[1656px] flex-1 flex-col bg-[linear-gradient(90deg,#f6dbc2_0%,#f8d9c2_40%,#f8dfca_65%,#fae1d1_80%,#f9e4d3_100%)] px-11 pt-[50px]">
        <div className="mb-[34px] flex h-[60px] shrink-0 items-center">
          <span className="text-[#3f5f86]"><Hug /></span>
          <Fit w={650} className="ml-6 pb-1 font-['Lato'] text-[40px] font-extrabold text-[#2d2d30]">3. Accommodation & Support Plan</Fit>
          <svg viewBox="0 0 24 24" className="mr-4 ml-auto size-8" fill="none" stroke="#9ca3af" strokeWidth="1.700" strokeLinejoin="round"><path d="M17.500 2.300a2.700 2.700 0 0 1 4 4L8 20l-6 2 1.500-6.500Z" /></svg>
        </div>
        <div className="flex h-[880px] shrink-0 flex-col rounded-[16px] bg-white px-12 pt-11 shadow-[0_2px_6px_rgba(0,0,0,0.06)]">
          <Fit w={519} className="font-['Lato'] text-[40px] leading-[60px] font-extrabold text-[#4594cf]">Academic Accommodations</Fit>
          <Fit w={500} className="mt-[9px] text-[27px] leading-10 text-[#4b5563]">Direct academic support modifications</Fit>
          <div className="mt-[31px] flex flex-col gap-6">
            <Item pill="w-[53px]" icon={<Clock className="size-10" />} chev="size-[34px]" lines={[["Extended time on exams, quizzes, and in-class assignments to allow for slower", 1191], ["reading and processing.", 365]]} />
            <Item pill="w-16" icon={<Volume2 className="size-10" />} chev="size-10" lines={[["Reduced-distraction testing environment to help maintain focus during exams.", 1189]]} />
            <Item pill="w-10" icon={<Headphones className="size-10" />} chev="size-[26px]" lines={[["Flexible deadlines or ability to request short extensions for major assignments when", 1270], ["needed due to attention or executive function barriers.", 825]]} />
          </div>
        </div>
        <div className="mt-14 flex h-[72px] w-[250px] shrink-0 items-center self-end rounded-[14px] bg-[#4594cf] pl-12 text-[28px] font-medium text-white">
          <Fit w={106} className="pb-0.5 font-['Lato']">Finished</Fit>
          <ChevronRight className="ml-[16px] size-8" />
        </div>
      </div>
    </div>
  );
}

/* ---------- dock ---------- */

type DockItem = { art: React.ReactNode; bg: string; dot?: boolean; badge?: string };

const S = ({ children }: { children: React.ReactNode }) => <svg viewBox="0 0 50 50" className="size-full">{children}</svg>;

const finderArt = <S><path d="M0 0h50v50H0z" fill="#e9eef5" /><path d="M0 0h27c-5 9-6 18-6 27h7c0 8 0 15 2 23H0Z" fill="#3f9df5" /><g stroke="#17355e" strokeWidth="2" fill="none" strokeLinecap="round"><path d="M14 15v4M37 15v4M10 33c8 8 22 8 30 0" /></g></S>;
const notionArt = <S><path d="M2 3 34 0l14 9v37L12 50 2 39Z" fill="#fff" /><path d="M4 6 33 3l10 6-29 3ZM4 9l7 6v30l-7-8Z" fill="#111" stroke="#111" /><path d="M14 15l31-2.500V43L14 46Z" fill="#fff" stroke="#111" strokeWidth="2.500" /><text x="29" y="39" textAnchor="middle" fontSize="28" fontWeight="700" fontFamily="Liberation Serif" fill="#111">N</text></S>;
const photosArt = <Photos className="size-full" />;
const gptArt = <SiOpenai className="m-auto size-[76%] text-[#222]" />;
const messagesArt = <S><ellipse cx="25" cy="23" rx="18" ry="15.500" fill="#fff" opacity=".92" /><path d="M14 34l-2 7 10-4Z" fill="#fff" /></S>;
const settingsArt = <S><circle cx="25" cy="25" r="21" fill="#2e3033" /><circle cx="25" cy="25" r="18" fill="none" stroke="#9a9ca0" strokeWidth="3" strokeDasharray="2 1.500" /><circle cx="25" cy="25" r="13" fill="none" stroke="#9a9ca0" strokeWidth="2.500" /><path d="M25 25H38M25 25l-7-11M25 25l-7 11" stroke="#9a9ca0" strokeWidth="2.500" /></S>;
const wordArt = <S><path d="M14 8h26q2 0 2 2v8H13Z" fill="#5aa2ea" /><path d="M13 16h29v9H13z" fill="#3a7bd8" /><path d="M13 25h29v8H13z" fill="#2559b8" /><path d="M13 33h29v6q0 2-2 2H15q-2 0-2-2Z" fill="#1a3f8c" /><rect x="5" y="16" width="18" height="18" rx="2" fill="#2251ae" /><text x="14" y="30" textAnchor="middle" fontSize="14" fontWeight="700" fill="#fff" fontFamily="Inter">W</text></S>;
const stickArt = <S><g stroke="#d9bd52" strokeWidth="2.500"><path d="M8 12h34M8 19h34" /></g><path d="M20 30c4-6 3 6 7 0s4 4 8 0" fill="none" stroke="#c9a63a" strokeWidth="2" /><path d="M12 50c14-2 14-8 22-9 6-1 12-4 16-8v17Z" fill="#e2b63c" /><path d="M22-3 4 48" stroke="#f4f4f4" strokeWidth="5" strokeLinecap="round" /></S>;

const dockA: DockItem[] = [
  { bg: "bg-white", art: finderArt, dot: true },
  { bg: "bg-[#b7b7ba]", art: <S>{["#63d15b", "#f4b73e", "#f08a36", "#e04040", "#9c9ea3", "#ef5670", "#a04fd8", "#3f8df2", "#5fd0a8"].map((c, i) => <rect key={i} x={8 + (i % 3) * 12} y={8 + Math.floor(i / 3) * 12.500} width="10" height="10" rx="2" fill={c} />)}</S> },
  { bg: "bg-[linear-gradient(#7fe574,#43c548)]", art: messagesArt, dot: true, badge: "85" },
  { bg: "", art: notionArt, dot: true },
  { bg: "", art: <S><rect x="1" y="1" width="38" height="38" rx="4" fill="#111" stroke="#fff" strokeWidth="2" /><rect x="8" y="9" width="40" height="40" rx="5" fill="#fff" stroke="#fff" /><rect x="10" y="11" width="36" height="36" rx="4" fill="#fff" stroke="#111" strokeWidth="3" /><path d="M10 12h36v5H10z" fill="#111" /><text x="28" y="41" textAnchor="middle" fontSize="27" fontWeight="700" fontFamily="Liberation Serif" fill="#111">22</text></S>, dot: true },
  { bg: "bg-[#070b0e]", art: <S><g fill="none" stroke="#7cc6da" strokeWidth="3.400" strokeLinecap="round"><path d="M40 14C30 8 13 12 9 26c-1 5 1 10 5 13M39 16C30 14 19 18 17 27c-1 4 1 8 4 11M38 19c-7 0-13 4-13 10 0 3 1 5 3 6" /><path d="M41 15c2 5 0 9-4 12" strokeWidth="2" /></g></S>, dot: true },
  { bg: "bg-[#04090c]", art: <S><g fill="#2fb0c2"><path d="M25 4v42" stroke="#7fd6e2" strokeWidth="1.500" /><path d="M24.300 24 10 10v9H7v17h5v6l12.300-12ZM25.700 24 40 10v9h3v17h-5v6L25.700 30Z" opacity=".85" /></g><path d="M24 20 10 35M26 20l14 15M8 20h34" stroke="#0a3138" strokeWidth="1.500" /></S>, dot: true },
  { bg: "bg-[linear-gradient(#3a78ee,#58b9f8)]", art: <S><rect x="7" y="13" width="36" height="24" rx="3" fill="#f4f4f2" /><path d="m8 15 17 14 17-14M8 36l12-11M42 36 30 25" fill="none" stroke="#a9a9a6" strokeWidth="1.500" /></S> },
  { bg: "bg-[#e9ecec]", art: <S><path d="M30 0h20v50H36L26 30Z" fill="#6fcd6b" /><path d="M0 0h12v24L0 28Z" fill="#57bf5c" /><path d="M13 0h12v26H13Z" fill="#3f86ee" /><path d="M0 28l26 22H0Z" fill="#e38fc5" /><path d="M26 50 36 42l8 8Z" fill="#f4cf4a" /><path d="M38-2c0 14 8 16 14 16" stroke="#dfe3e6" strokeWidth="6" fill="none" /><circle cx="18" cy="32" r="12" fill="#2f73e8" stroke="#fff" strokeWidth="2" /><path d="m18 23 6.500 15L18 35l-6.500 3Z" fill="#fff" /></S> },
  { bg: "bg-[linear-gradient(135deg,#7fc4ea,#b9e4f4_45%,#3f9cd0)]", art: <S><g fill="#050607"><circle cx="20" cy="8.500" r="5.500" /><path d="M9 26c0-9 4-13 10-12 4 1 5 5 7 8l6 4-1 2.500-8-2 1 5 8-1 4 14h-6l-4-8-14 4-4-4Z" /><path d="M0 50q6-8 25-8t25 8ZM32 17l3-1-3 13-3-1Z" /></g></S> },
  { bg: "bg-[#f4f4f4]", art: <ChromeIcon className="m-auto size-[92%]" />, dot: true },
  { bg: "bg-[#fbfbfa]", art: <div className="flex size-full flex-col items-center"><div className="flex h-[15px] w-full items-center justify-center bg-[#e5493f] text-[10px] font-semibold text-white">SEP</div><div className="text-[30px] leading-[34px] font-light text-[#222]">22</div></div> },
  { bg: "bg-[linear-gradient(#74e46c,#3fc24a)]", art: <S><rect x="7" y="14" width="24" height="22" rx="6" fill="#fff" /><path d="m33 22 9-6v18l-9-6Z" fill="#fff" /></S>, badge: "3" },
  { bg: "bg-[#f3f4f6]", art: <S><path d="M4 4h42v42H4z" fill="#9fbdf0" /><path d="M4 26h42v8H4z" fill="#2f4f7e" /><path d="M4 33c10-5 12 4 42 0v13H4Z" fill="#e4d9cd" /><path d="M26 26h17v6l4 18H23l3-18Z" fill="#20242a" /><path d="M26 33h17l3 15H24Z" fill="#cfd4d8" /></S> },
  { bg: "bg-white", art: <S><g stroke="#3b82d8" strokeWidth="2.200"><path d="M10 9v32M14 9v32M18 9v32M22 15v14M26 20v14M30 25v14M33 9v32M37 9v32M41 9v32" /></g></S> },
  { bg: "bg-[#a9834c]", art: <S><circle cx="25" cy="25" r="16" fill="none" stroke="#86632f" strokeWidth="2" /><circle cx="25" cy="20" r="6" fill="none" stroke="#86632f" strokeWidth="2" /><path d="M14 36c2-9 20-9 22 0" fill="#94703a" stroke="#86632f" strokeWidth="2" /></S> },
  { bg: "bg-[#f8f8f6]", art: <S><circle cx="10" cy="13" r="4" fill="#3d82f0" /><circle cx="10" cy="25" r="4" fill="#de4a3f" /><circle cx="10" cy="37" r="4" fill="#eea041" /><path d="M19 13h25M19 25h25M19 37h25" stroke="#c9c9c7" strokeWidth="1.500" /></S>, badge: "1" },
  { bg: "bg-[#f4f3ee]", art: <S><path d="M0 0h50v12H0z" fill="#f7cd47" /><path d="M0 14h50" stroke="#b7a46a" strokeDasharray="1 1.500" /><path d="M0 26h50M0 37h50" stroke="#cfcec9" /></S> },
  { bg: "bg-white", art: photosArt, dot: true },
  { bg: "bg-[#eaf0f8]", art: gptArt, dot: true },
  { bg: "bg-[#f6e88f]", art: stickArt, dot: true },
  { bg: "bg-[#f9dc4c]", art: <S><path d="m10 10 8-1 4 11-8 21h-5l5-20ZM20 9l7-1 4 12-8 21h-5l6-21ZM30 9l7-1 4 12-8 21h-5l6-21Z" fill="#161203" /></S> },
  { bg: "bg-[linear-gradient(#22332d,#0d1312)]", art: <div className="m-auto flex items-center text-[19px] font-medium tracking-[-0.5px] text-white"><FaApple className="size-[17px]" />tv</div> },
  { bg: "bg-[linear-gradient(#ee5568,#ea3a44)]", art: <S><g fill="#fff"><ellipse cx="15" cy="36" rx="5.500" ry="4.500" /><ellipse cx="32" cy="32" rx="5.500" ry="4.500" /><path d="M17 13l20.500-4v23H34V17l-13.500 3v16H17Z" /></g></S> },
  { bg: "bg-[linear-gradient(#cdd6df,#8c8f94)]", art: settingsArt, dot: true },
  { bg: "bg-[linear-gradient(#4db5f5,#2160dd)]", art: <S><g stroke="#fff" strokeWidth="4" strokeLinecap="round"><path d="M28 12 15 36M22 12l15 26M9 31h17M33 31h8" /></g></S> },
  { bg: "bg-[#b9b9b7]", art: <S><rect x="15" y="4" width="20" height="42" rx="4" fill="#173a4a" stroke="#222" strokeWidth="2" /><path d="M16 8q0-3 3-3h12q3 0 3 3v8L16 38Z" fill="#ee9b86" /><path d="M34 17 16 39v3q0 3 3 3h12q3 0 3-3Z" fill="#14718f" /></S> },
  { bg: "bg-white", art: <Slack className="m-auto size-[74%]" />, dot: true, badge: "•" },
];
const dockB: DockItem[] = [
  { bg: "bg-white", art: wordArt, dot: true },
  { bg: "bg-[#b02519]", art: <S><path d="M11 38c9-2 14-20 13-26-1-3-4 0-2 6 3 9 9 16 17 14 3-1 0-4-6-3-8 1-16 4-22 9Z" fill="none" stroke="#fff" strokeWidth="2.600" strokeLinejoin="round" /></S>, dot: true },
  { bg: "bg-[linear-gradient(#2a5fc0,#4c97e6)]", art: <S><circle cx="34" cy="20" r="8.500" fill="#f5c84a" /><path d="M13 38a7 7 0 0 1 0-13c1-8 14-9 16 0 6-1 11 3 9 8-1 4-4 5-7 5Z" fill="#eef4fb" /></S> },
];

function DockIcon({ item }: { item: DockItem }) {
  return (
    <div className="relative flex h-[84px] w-[66.15px] shrink-0 flex-col items-center pt-[14px]">
      <div className={"flex size-[50px] overflow-hidden rounded-[12px] " + item.bg}>{item.art}</div>
      {item.dot && <div className="mt-2 size-[8px] rounded-full bg-[#a8a39e]" />}
      {item.badge && (
        <div className="absolute top-[7px] right-[1px] flex h-6 min-w-6 items-center justify-center rounded-full bg-[#e5493d] text-[13px] text-white">{item.badge}</div>
      )}
    </div>
  );
}

const thumbs: { cls: string; art: React.ReactNode; badgeBg: string; badge: React.ReactNode }[] = [
  { cls: "h-9 w-[58px] bg-[#211b2c]", badgeBg: "bg-[#f6e88f]", badge: stickArt, art: <div className="flex h-full w-2 flex-col gap-1 bg-[#2c2936] pt-0.5"><div className="h-1 w-2 bg-[#8a8458]" /><div className="h-px w-1.5 bg-[#6a6a75]" /><div className="h-px w-1.5 bg-[#6a6a75]" /><div className="h-px w-1.5 bg-[#6a6a75]" /></div> },
  { cls: "h-9 w-[58px] bg-[#1b1b1e]", badgeBg: "bg-white", badge: wordArt, art: <div className="flex size-full items-start justify-center gap-[3px] pt-1.5">{[0, 1, 2, 3, 4, 5].map((i) => <div key={i} className="h-2 w-1.5 bg-[#e8e8e8]" />)}</div> },
  { cls: "h-10 w-[58px] bg-[#f4f4f4]", badgeBg: "", badge: notionArt, art: <div className="flex size-full gap-1 p-1"><div className="w-3 bg-[#e7e2dc]" /><div className="mt-2 ml-auto h-[22px] w-5 bg-[#c9daf3]" /></div> },
  { cls: "h-9 w-[58px] bg-[#303032]", badgeBg: "bg-[#eaf0f8]", badge: gptArt, art: <div className="h-full w-2.5 bg-[#1f1f21]" /> },
  { cls: "h-[46px] w-[58px] bg-[#1e1e20]", badgeBg: "bg-white", badge: finderArt, art: <div className="flex size-full"><div className="h-full w-[14px] bg-[#4c4c4e]" /><div className="mt-1.5 ml-0.5 h-3 w-6 bg-[#3e3937]" /></div> },
  { cls: "h-7 w-[58px] bg-[#161617]", badgeBg: "bg-white", badge: photosArt, art: <div className="flex size-full"><div className="w-3 bg-[#3f3f42]" /><div className="mt-0.5 ml-3 w-[19px] bg-[#a59e90]" /></div> },
  { cls: "ml-1 h-[58px] w-[50px] bg-[#29292b]", badgeBg: "bg-[#b9bcc0]", badge: settingsArt, art: <div className="flex size-full gap-1"><div className="w-3 bg-[#3a3a3d]" /><div className="mt-2 flex flex-col gap-1.5">{[0, 1, 2, 3, 4, 5].map((i) => <div key={i} className="h-0.5 w-6 bg-[#55555a]" />)}</div></div> },
  { cls: "h-[54px] w-[58px] bg-[#171718]", badgeBg: "bg-[#52cf57]", badge: messagesArt, art: <div className="flex size-full"><div className="w-6 bg-[#48484a] pt-4"><div className="h-1.5 w-full bg-[#3d86f0]" /></div><div className="ml-auto flex flex-col items-end gap-1 pt-1"><div className="h-2.5 w-4 bg-[#a8a294]" /><div className="h-1.5 w-4 bg-[#b9aa90]" /><div className="h-1 w-3 bg-[#3d86f0]" /></div></div> },
  { cls: "h-9 w-[58px] bg-[#1b1420]", badgeBg: "bg-white", badge: <Slack className="m-auto size-[78%]" />, art: <div className="h-full w-4 bg-[#38123e]" /> },
];

function Dock() {
  return (
    <div className="absolute top-[1770px] left-[49px] flex h-[84px] w-[2782px] rounded-[26px] bg-[linear-gradient(90deg,#2c2521_0%,#48362c_22%,#3a2d27_31%,#2c2523_42%,#202120_55%,#1c1f1d_70%,#1b1b15_100%)] pl-[5px] shadow-[inset_0_0_0_2px_rgba(255,255,255,0.16)]">
      {dockA.map((d, i) => <DockIcon key={i} item={d} />)}
      <div className="mt-3 mr-[11px] ml-[15px] h-[60px] w-0.5 bg-[#5d5f5d]" />
      {dockB.map((d, i) => <DockIcon key={i} item={d} />)}
      <div className="mt-3 mr-[15px] ml-[16px] h-[60px] w-0.5 bg-[#5d5f5d]" />
      <div className="flex h-[84px] gap-2">
        {thumbs.map((t, i) => (
          <div key={i} className="relative flex h-[76px] w-[58.3px] items-center">
            <div className={"overflow-hidden " + t.cls}>{t.art}</div>
            <div className={"absolute right-0 bottom-[9px] flex size-5 overflow-hidden rounded-[5px] " + t.badgeBg}>{t.badge}</div>
          </div>
        ))}
      </div>
      <svg viewBox="0 0 44 58" className="mt-[10px] ml-[15px] h-[58px] w-11">
        <defs><linearGradient id="can"><stop offset="0" stopColor="#6f7273" /><stop offset=".4" stopColor="#a2a4a4" /><stop offset="1" stopColor="#5c5f60" /></linearGradient></defs>
        <path d="M1 10h42l-5 43q-1 4-16 4T6 53Z" fill="url(#can)" />
        <path d="M2 9 8 1l6 4 6-5 5 5 7-5 4 6 7 4-4 5H5Z" fill="#dfe0df" /><path d="m10 8 5-4 2 5ZM24 9l4-5 4 6Z" fill="#6c6f73" /><path d="m18 7 3 4-5 1Z" fill="#4b8fb0" />
        <ellipse cx="22" cy="12" rx="21" ry="3" fill="none" stroke="#c3c5c5" />
      </svg>
    </div>
  );
}

/* Dark grassy wallpaper that shows round the windows and the dock. */
function Wallpaper() {
  return (
    <svg className="absolute inset-0 size-full" viewBox="0 0 2880 1864">
      <defs>
        <linearGradient id="ground"><stop offset="0" stopColor="#3a2b22" /><stop offset=".45" stopColor="#231c17" /><stop offset=".6" stopColor="#0d0f0b" /><stop offset="1" stopColor="#070906" /></linearGradient>
        <filter id="grass" x="0" y="0" width="1" height="1"><feTurbulence type="fractalNoise" baseFrequency=".18 .25" numOctaves="3" seed="4" /><feColorMatrix values="0 0 0 0 0  0 0 0 0 0  0 0 0 0 0  2.600 0 0 0 -0.900" /></filter>
      </defs>
      <rect width="2880" height="1864" fill="#050604" />
      <rect y="1700" width="2880" height="164" fill="url(#ground)" />
      <rect y="1700" width="2880" height="164" filter="url(#grass)" />
    </svg>
  );
}

export default function App() {
  return (
    <div className="relative h-[1864px] w-[2880px] overflow-hidden bg-black font-['Inter',sans-serif]">
      <Wallpaper />
      <div className="relative"><MenuBar /></div>

      {/* windows stacked behind the browser */}
      <div className="absolute top-[86px] left-[18px] flex h-[1674px] w-[2854px] items-end overflow-hidden rounded-[26px] border border-[#3a3a3a] bg-[#191919]">
        <div className="h-5 w-[795px] bg-[#151515]" />
        <div className="h-5 w-[1871px] bg-[linear-gradient(#4a4a4a,#5c5c5c)]" />
      </div>
      <div className="absolute top-[68px] left-0 h-[1676px] w-[2846px] overflow-hidden rounded-[26px] border-t-2 border-l border-[#66675f] bg-[#131313]">
        <div className="h-[78px] bg-[#24271e]" />
        <div className="h-[94px] bg-[#2c3022]" />
      </div>

      {/* browser window */}
      <div className="absolute top-[84px] left-4 flex h-[1666px] w-[2848px] flex-col overflow-hidden rounded-[24px] border-t-2 border-[#716b5b] shadow-[0_0_0_1.5px_#000]">
        <TabStrip />
        <Toolbar />
        <Bookmarks />
        <div className="flex min-h-0 flex-1 overflow-hidden">
          <Sidebar />
          <div className="flex flex-1 flex-col">
            <Header />
            <Report />
          </div>
        </div>
        <div className="pointer-events-none absolute bottom-0 h-[90px] w-full bg-[linear-gradient(transparent,rgba(0,0,0,0.08))]" />
      </div>

      <Dock />
    </div>
  );
}
